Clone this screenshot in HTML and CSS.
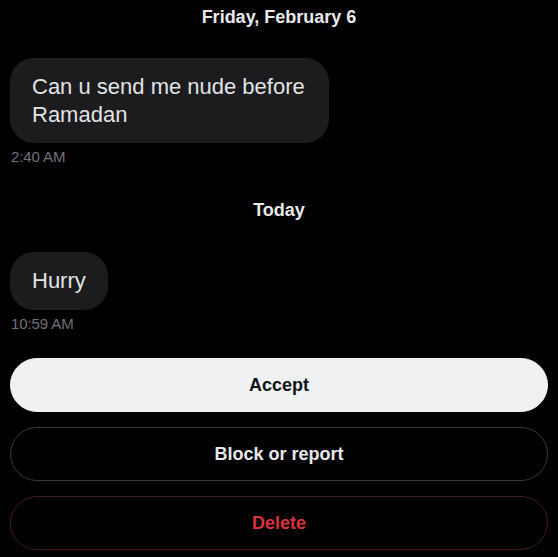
FILE: index.html
```html
<!DOCTYPE html>
<html>
<head>
<meta charset="utf-8">
<link rel="stylesheet" href="styles.css">
</head>
<body>
<div class="screen">
  <div class="day">Friday, February 6</div>
  <div class="bubble wide">Can u send me nude before Ramadan</div>
  <div class="time">2:40 AM</div>
  <div class="day today">Today</div>
  <div class="bubble">Hurry</div>
  <div class="time">10:59 AM</div>
  <div class="actions">
    <button class="btn accept">Accept</button>
    <button class="btn outline">Block or report</button>
    <button class="btn danger">Delete</button>
  </div>
</div>
</body>
</html>
```
FILE: styles.css
```css
html, body {
  margin: 0;
  padding: 0;
  background: #000;
}
.screen {
  width: 558px;
  height: 557px;
  box-sizing: border-box;
  padding: 6px 10px 0 10px;
  display: flex;
  flex-direction: column;
  align-items: flex-start;
  font-family: "Liberation Sans", Arial, sans-serif;
  color: #e7e9ea;
  overflow: hidden;
}
.day {
  align-self: center;
  font-weight: bold;
  font-size: 18px;
  line-height: 22px;
  color: #e7e9ea;
}
.today {
  margin-top: 33px;
}
.bubble {
  margin-top: 30px;
  background: #1c1c1f;
  border-radius: 24px;
  padding: 15px 22px 15px 22px;
  font-size: 22px;
  line-height: 28px;
  max-width: 319px;
  box-sizing: border-box;
  color: #e1e3e4;
}
.wide {
  padding-bottom: 14px;
}
.today + .bubble {
  margin-top: 31px;
}
.time {
  margin-top: 5px;
  padding-left: 1px;
  font-size: 15px;
  line-height: 18px;
  color: #6f7276;
  letter-spacing: -0.1px;
}
.actions {
  align-self: stretch;
  margin-top: 25px;
  display: flex;
  flex-direction: column;
  gap: 15px;
}
.btn {
  height: 54px;
  border-radius: 27px;
  font-family: "Liberation Sans", Arial, sans-serif;
  font-weight: bold;
  font-size: 18px;
  background: transparent;
  border: 1px solid #38393c;
  color: #e7e9ea;
}
.accept {
  background: #eff1f2;
  border-color: #eff1f2;
  color: #0f1419;
}
.danger {
  border-color: #461b1f;
  color: #d8323f;
}
```
